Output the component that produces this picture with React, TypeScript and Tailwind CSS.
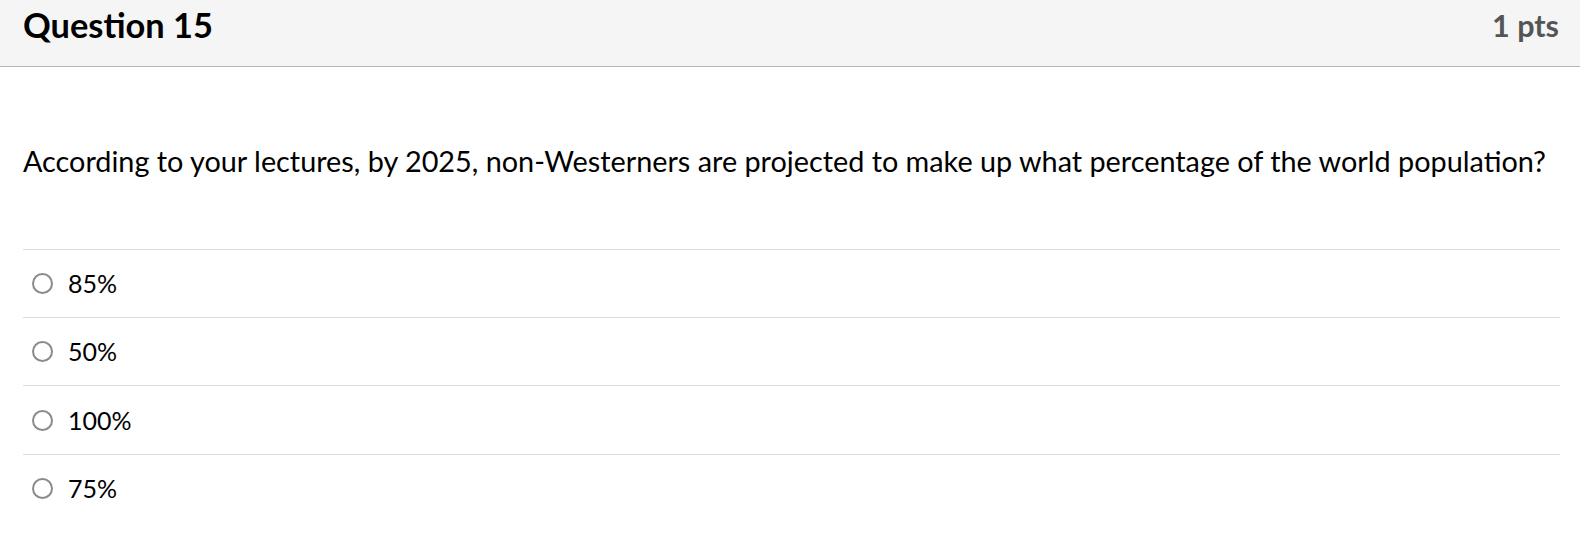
import React from "react";

const answers = ["85%", "50%", "100%", "75%"];

export default function App() {
  return (
    <div className="w-[1580px] h-[544px] bg-white text-black font-['Lato',sans-serif]">
      {/* Header */}
      <div className="h-[67px] flex items-center justify-between pl-[23px] pr-[21px] bg-[#f5f5f5] border-b border-[#b5b5b5]">
        <h2 className="text-[34.4px] font-bold leading-none -mt-[16px]">Question 15</h2>
        <div className="text-[30.5px] font-bold text-[#555555] leading-none -mt-[16px]">1 pts</div>
      </div>

      {/* Body */}
      <div className="pl-[23px] pr-[20px]">
        <p className="text-[28.8px] leading-none pt-[80px] pb-[73px]">
          According to your lectures, by 2025, non-Westerners are projected to make up what percentage of the world population?
        </p>
        <div>
          {answers.map((a) => (
            <label key={a} className="flex items-center h-[68.3px] border-t border-[#dddddd]">
              <span className="ml-[9px] w-[21px] h-[21px] rounded-full border-2 border-[#8a8a8a] bg-white" />
              <span className="ml-[15px] text-[25px] leading-none">{a}</span>
            </label>
          ))}
        </div>
      </div>
    </div>
  );
}
